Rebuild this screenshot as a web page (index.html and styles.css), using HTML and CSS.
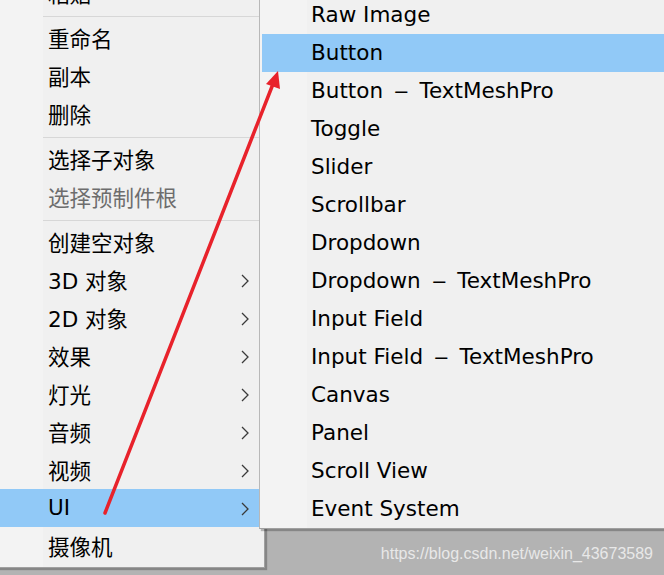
FILE: index.html
```html
<!DOCTYPE html>
<html>
  <head>
    <meta charset="utf-8" />
    <title>Context menu</title>
    <link rel="stylesheet" href="styles.css">
  </head>
  <body>
    <div class="menu main-menu">
      <div class="item"><span class="label">粘贴</span></div>
      <div class="sep"></div>
      <div class="item"><span class="label">重命名</span></div>
      <div class="item"><span class="label">副本</span></div>
      <div class="item"><span class="label">删除</span></div>
      <div class="sep"></div>
      <div class="item"><span class="label">选择子对象</span></div>
      <div class="item disabled"><span class="label">选择预制件根</span></div>
      <div class="sep"></div>
      <div class="item"><span class="label">创建空对象</span></div>
      <div class="item"><span class="label">3D 对象</span><svg class="chev" width="8" height="14" viewBox="0 0 8 14"><polyline points="1,1 7,7 1,13" /></svg></div>
      <div class="item"><span class="label">2D 对象</span><svg class="chev" width="8" height="14" viewBox="0 0 8 14"><polyline points="1,1 7,7 1,13" /></svg></div>
      <div class="item"><span class="label">效果</span><svg class="chev" width="8" height="14" viewBox="0 0 8 14"><polyline points="1,1 7,7 1,13" /></svg></div>
      <div class="item"><span class="label">灯光</span><svg class="chev" width="8" height="14" viewBox="0 0 8 14"><polyline points="1,1 7,7 1,13" /></svg></div>
      <div class="item"><span class="label">音频</span><svg class="chev" width="8" height="14" viewBox="0 0 8 14"><polyline points="1,1 7,7 1,13" /></svg></div>
      <div class="item"><span class="label">视频</span><svg class="chev" width="8" height="14" viewBox="0 0 8 14"><polyline points="1,1 7,7 1,13" /></svg></div>
      <div class="item active"><span class="label">UI</span><svg class="chev" width="8" height="14" viewBox="0 0 8 14"><polyline points="1,1 7,7 1,13" /></svg></div>
      <div class="item"><span class="label">摄像机</span></div>
    </div>

    <div class="menu sub-menu">
      <div class="item"><span class="label">Raw Image</span></div>
      <div class="item active"><span class="label">Button</span></div>
      <div class="item"><span class="label">Button <span class="dash">–</span> TextMeshPro</span></div>
      <div class="item"><span class="label">Toggle</span></div>
      <div class="item"><span class="label">Slider</span></div>
      <div class="item"><span class="label">Scrollbar</span></div>
      <div class="item"><span class="label">Dropdown</span></div>
      <div class="item"><span class="label">Dropdown <span class="dash">–</span> TextMeshPro</span></div>
      <div class="item"><span class="label">Input Field</span></div>
      <div class="item"><span class="label">Input Field <span class="dash">–</span> TextMeshPro</span></div>
      <div class="item"><span class="label">Canvas</span></div>
      <div class="item"><span class="label">Panel</span></div>
      <div class="item"><span class="label">Scroll View</span></div>
      <div class="item"><span class="label">Event System</span></div>
    </div>

    <div class="watermark">https://blog.csdn.net/weixin_43673589</div>

    <svg class="arrow" width="664" height="575" viewBox="0 0 664 575">
      <line x1="105" y1="513" x2="273" y2="84" stroke="#e8222b" stroke-width="3.5" stroke-linecap="round" />
      <polygon points="278,71 266,84 280,89" fill="#e8222b" />
    </svg>
  </body>
</html>
```

FILE: styles.css
```css
html, body {
  margin: 0;
  padding: 0;
}
body {
  width: 664px;
  height: 575px;
  overflow: hidden;
  position: relative;
  background-color: #b3b3b3;
  font-family: "DejaVu Sans", "Noto Sans CJK SC", sans-serif;
  font-size: 21.5px;
  color: #000;
}
.menu {
  position: absolute;
  background-color: #f0f0f0;
  box-sizing: border-box;
}
.main-menu {
  left: -2px;
  top: -26px;
  width: 267px;
  padding: 0 0 2px 0;
  border-right: 1px solid #a0a0a0;
  border-bottom: 1px solid #a0a0a0;
  box-shadow: 2px 2px 1px rgba(0, 0, 0, 0.25);
  background: linear-gradient(to right, #f3f3f3 45px, #f0f0f0 45px);
}
.sub-menu {
  left: 259px;
  top: -4px;
  width: 420px;
  border-left: 1px solid #b8b8b8;
  border-bottom: 1px solid #a0a0a0;
  padding: 0 0 0 2px;
  box-shadow: 2px 2px 1px rgba(0, 0, 0, 0.25);
  background: linear-gradient(to right, #f3f3f3 47px, #f0f0f0 47px);
}
.item {
  display: flex;
  align-items: center;
  height: 38px;
  box-sizing: border-box;
  padding-bottom: 1px;
  white-space: nowrap;
}
.main-menu .item {
  padding-left: 50px;
}
.sub-menu .item {
  padding-left: 49px;
}
.label {
  flex: 1;
}
.dash {
  display: inline-block;
  margin: 0 6px;
  transform: scaleX(1.4);
}
.item.active {
  background-color: #91c9f7;
}
.item.disabled {
  color: #6d6d6d;
}
.chev {
  margin-right: 15px;
  margin-top: 2px;
  fill: none;
  stroke: #3a3a3a;
  stroke-width: 1.3;
}
.sep {
  height: 7px;
  box-sizing: border-box;
  padding-top: 4px;
  margin-left: 45px;
}
.sep::after {
  content: "";
  display: block;
  height: 1px;
  background-color: #d7d7d7;
}
.watermark {
  position: absolute;
  right: 11px;
  top: 545px;
  font-family: "Liberation Sans", sans-serif;
  font-size: 16px;
  color: #e8e8e8;
}
.arrow {
  position: absolute;
  left: 0;
  top: 0;
  pointer-events: none;
}
```
